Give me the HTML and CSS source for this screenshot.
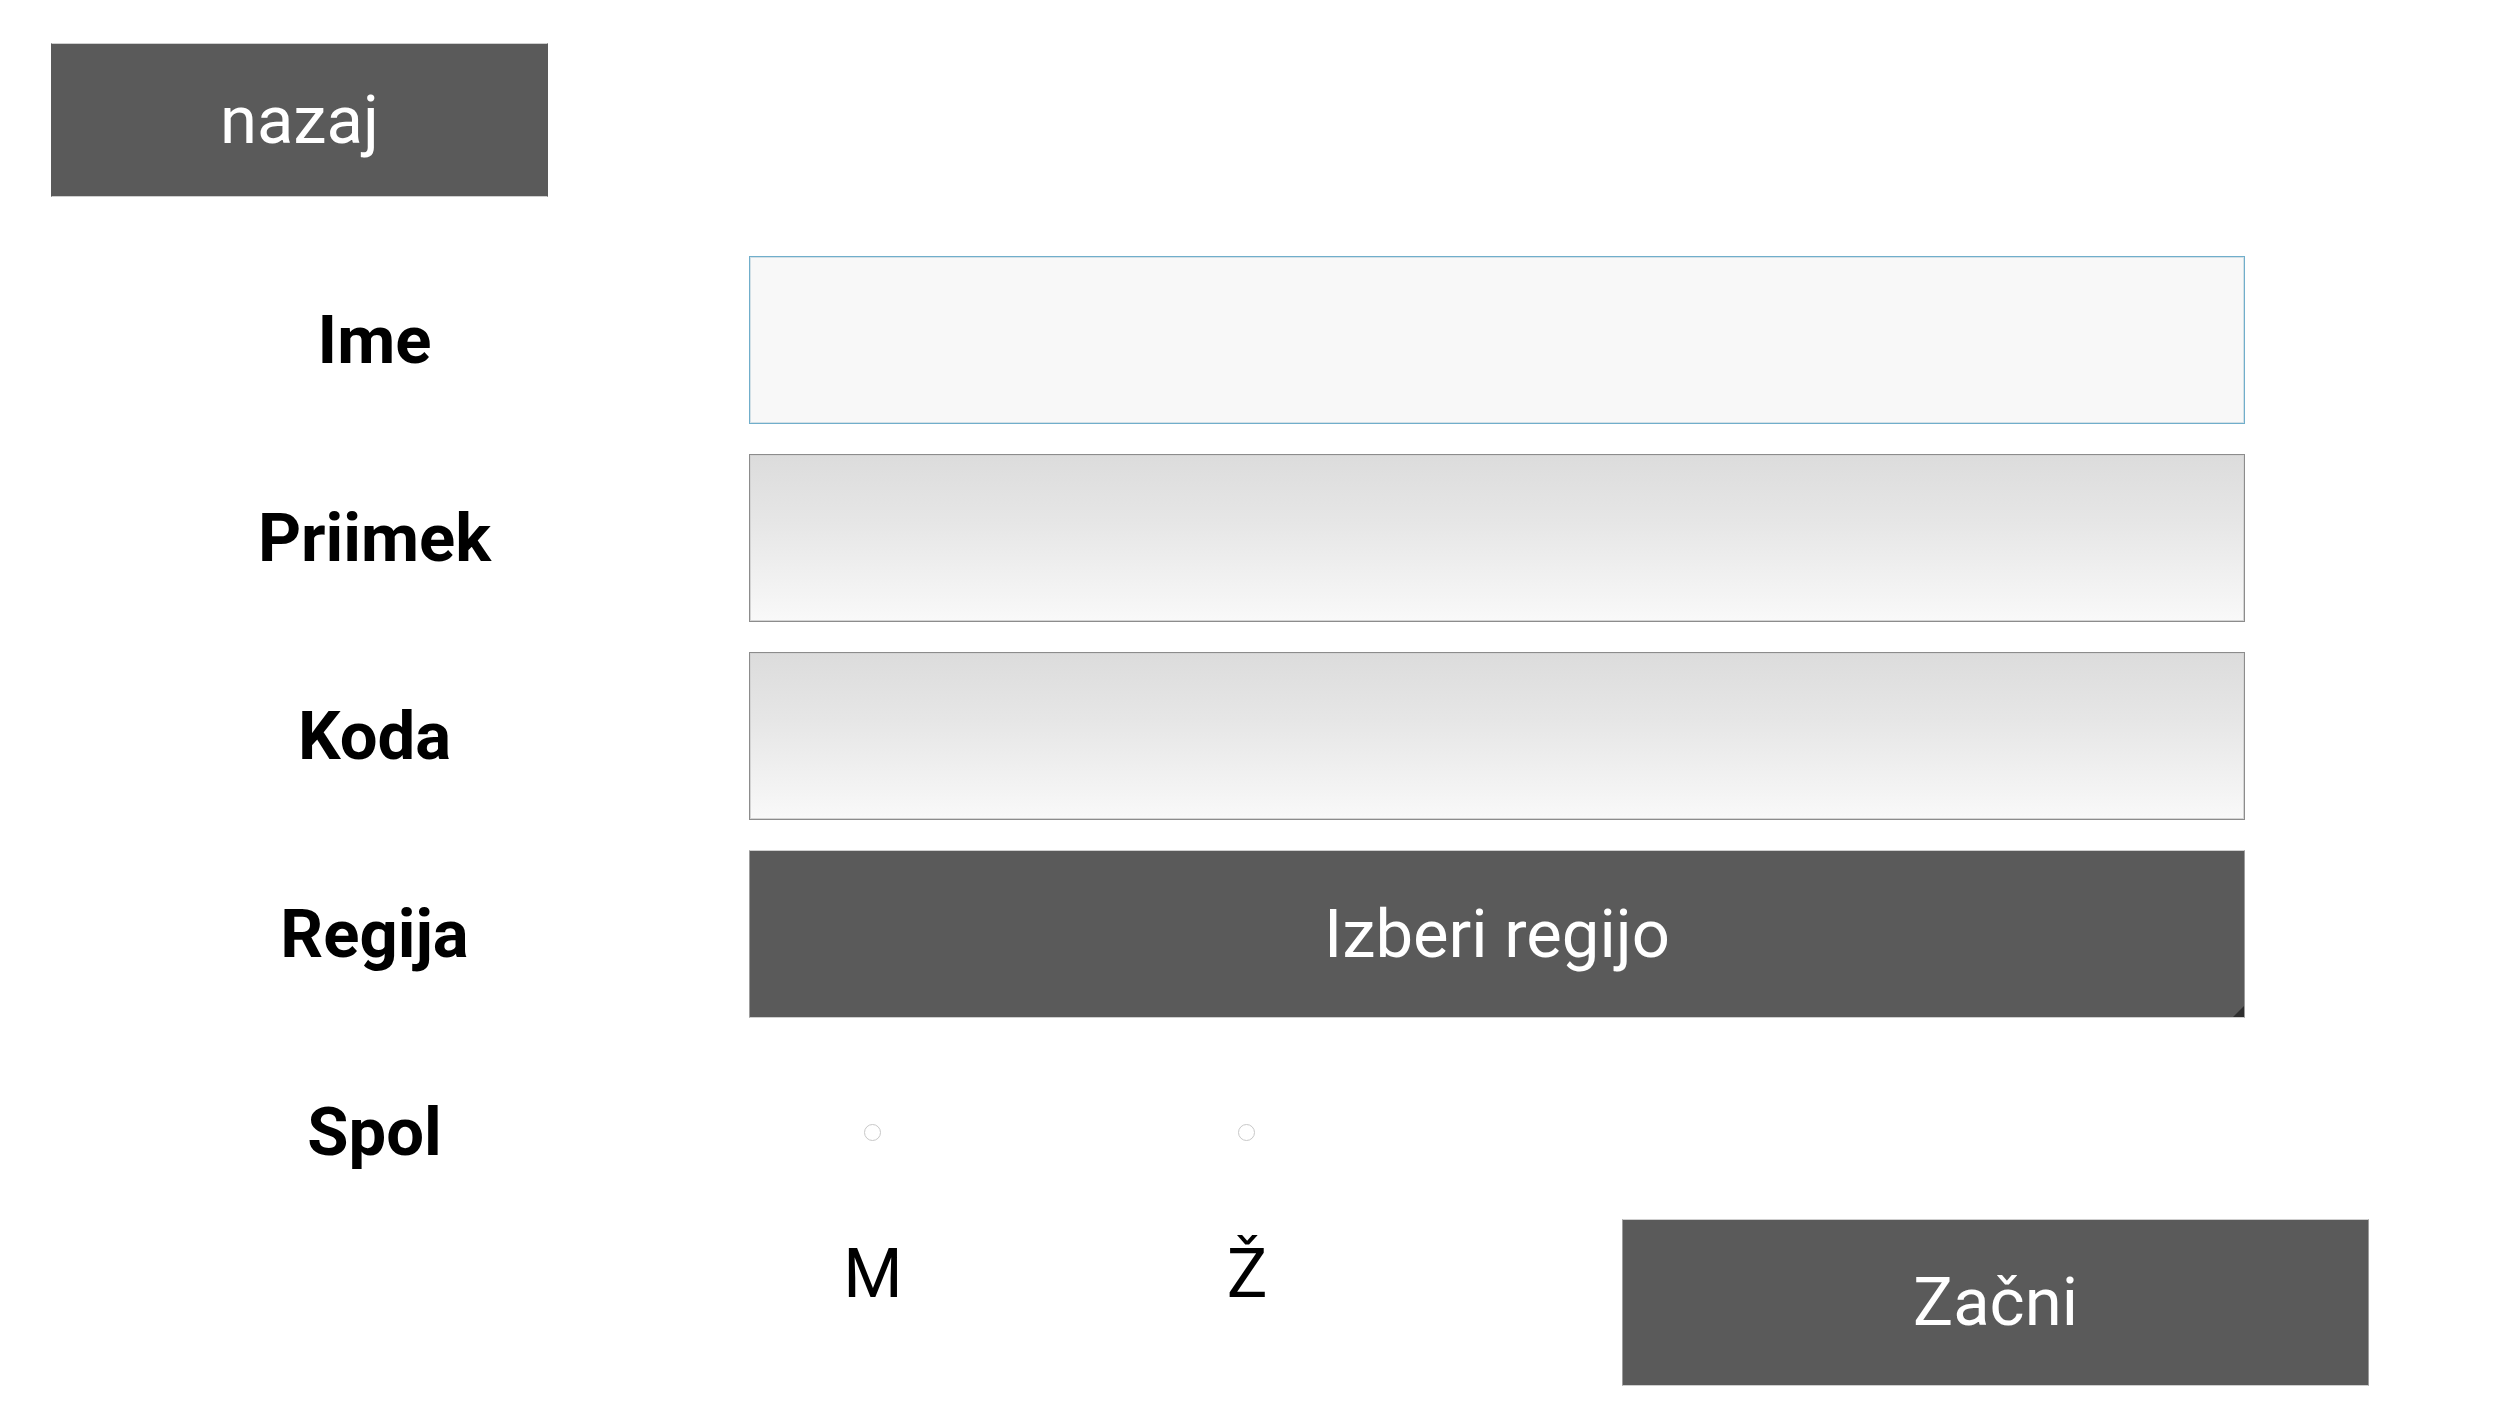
FILE: index.html
```html
<!DOCTYPE html>
<html lang="sl">
<head>
<meta charset="utf-8">
<title>Registracija</title>
<link rel="stylesheet" href="styles.css">
</head>
<body>
<div class="page">
  <header class="topbar">
    <button class="btn btn-back" type="button">nazaj</button>
  </header>
  <form class="form">
    <label class="label">Ime</label>
    <div class="field field-active"></div>

    <label class="label">Priimek</label>
    <div class="field"></div>

    <label class="label">Koda</label>
    <div class="field"></div>

    <label class="label">Regija</label>
    <button class="btn btn-select" type="button">Izberi regijo</button>

    <label class="label">Spol</label>
    <div class="radios">
      <span class="radio"></span>
      <span class="radio"></span>
    </div>
  </form>
  <div class="bottom">
    <div class="choice-labels">
      <span class="choice">M</span>
      <span class="choice">Ž</span>
    </div>
    <button class="btn btn-start" type="button">Začni</button>
  </div>
</div>
</body>
</html>
```

FILE: styles.css
```css
html, body {
  margin: 0;
  padding: 0;
  background: #ffffff;
}

body {
  font-family: Roboto, "Liberation Sans", Arial, sans-serif;
  width: 2495px;
  height: 1416px;
  overflow: hidden;
}

.page {
  display: flex;
  flex-direction: column;
}

.topbar {
  display: flex;
  padding: 43px 0 0 51px;
}

.btn {
  font-family: Roboto, "Liberation Sans", Arial, sans-serif;
  font-size: 67px;
  font-weight: 400;
  color: #ffffff;
  background: #5a5a5a;
  border: 1px solid #9c9c9c;
  border-top-color: #cfcfcf;
  border-bottom-color: #cfcfcf;
  margin: 0;
  padding: 0;
  display: flex;
  align-items: center;
  justify-content: center;
  line-height: 1;
  box-sizing: border-box;
  cursor: pointer;
}

.btn-back {
  width: 497px;
  height: 154px;
  border-left-color: #5a5a5a;
  border-right-color: #5a5a5a;
}

.form {
  display: grid;
  grid-template-columns: 749px 1496px;
  grid-auto-rows: 168px;
  row-gap: 30px;
  margin-top: 59px;
}

.label {
  font-family: Roboto, "Liberation Sans", Arial, sans-serif;
  font-weight: 700;
  font-size: 67px;
  color: #000000;
  display: flex;
  align-items: center;
  justify-content: center;
}

.field {
  box-sizing: border-box;
  border: 1px solid #8c8c8c;
  box-shadow: inset 0 0 0 1px #d4d4d4;
  background: linear-gradient(to bottom, #dcdcdc 0%, #e6e6e6 40%, #f4f4f4 85%, #f9f9f9 100%);
}

.field-active {
  border-color: #70aecb;
  box-shadow: inset 0 0 0 1px #d3e0e6;
  background: #f8f8f8;
}

.btn-select {
  position: relative;
  width: 100%;
  height: 100%;
}

.btn-select::after {
  content: "";
  position: absolute;
  right: 0;
  bottom: 0;
  width: 0;
  height: 0;
  border-style: solid;
  border-width: 0 0 11px 11px;
  border-color: transparent transparent #2e2e2e transparent;
}

.radios {
  display: flex;
  align-items: center;
  gap: 357px;
  padding-left: 115px;
}

.radio {
  width: 17px;
  height: 17px;
  box-sizing: border-box;
  border: 1px solid #c8c8c8;
  border-radius: 50%;
  background: #ffffff;
}

.bottom {
  display: flex;
  margin-top: 3px;
  padding-left: 749px;
}

.choice-labels {
  display: flex;
  width: 873px;
  padding-left: 74px;
  padding-top: 21px;
  box-sizing: border-box;
  gap: 274px;
  align-items: flex-start;
}

.choice {
  width: 100px;
  text-align: center;
  font-size: 68px;
  line-height: 68px;
  color: #000000;
}

.btn-start {
  width: 747px;
  height: 167px;
}
```
